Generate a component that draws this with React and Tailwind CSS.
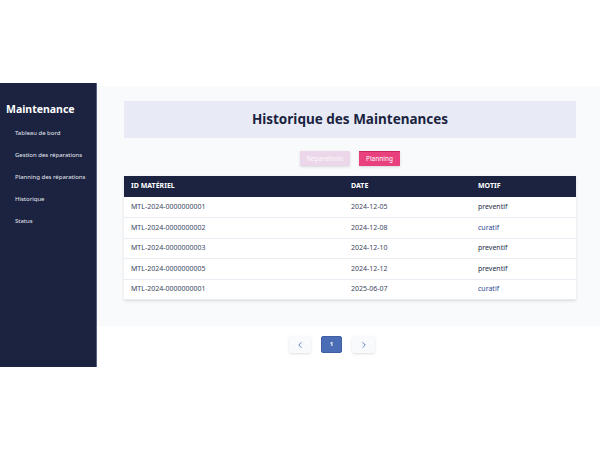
import { ChevronLeft, ChevronRight } from "lucide-react";

const rows = [
  { id: "MTL-2024-0000000001", date: "2024-12-05", motif: "preventif" },
  { id: "MTL-2024-0000000002", date: "2024-12-08", motif: "curatif" },
  { id: "MTL-2024-0000000003", date: "2024-12-10", motif: "preventif" },
  { id: "MTL-2024-0000000005", date: "2024-12-12", motif: "preventif" },
  { id: "MTL-2024-0000000001", date: "2025-06-07", motif: "curatif" },
];

const menu = [
  "Tableau de bord",
  "Gestion des réparations",
  "Planning des réparations",
  "Historique",
  "Status",
];

function Sidebar() {
  return (
    <aside className="w-[97px] h-[284px] shrink-0 bg-[#1b2340] border-r border-[#5a6180] text-white">
      <h1 className="pl-[6px] pt-[21px] text-[10.5px] font-bold leading-none">
        Maintenance
      </h1>
      <ul className="pl-[15px] pt-[14px] flex flex-col gap-[13px]">
        {menu.map((m) => (
          <li key={m} className="text-[6px] leading-[9px] text-[#e6e9f2]">
            {m}
          </li>
        ))}
      </ul>
    </aside>
  );
}

export default function App() {
  return (
    <div
      className="pt-[83px] flex bg-white min-h-[450px]"
      style={{ fontFamily: '"Noto Sans", "Open Sans", sans-serif' }}
    >
      <Sidebar />
      <main className="flex-1">
        <div className="mt-[3px] h-[240px] bg-[#f9fafc] pl-[27px] pr-[24px] pt-[15px]">
          <div className="h-[37px] bg-[#e8ebf6] flex items-center justify-center">
            <h2 className="text-[13.5px] font-bold text-[#1b2340]">
              Historique des Maintenances
            </h2>
          </div>

          <div className="mt-[13px] flex justify-center gap-[9px]">
            <button className="w-[50px] h-[15px] bg-[#ecd6e9] text-white/80 text-[6.5px] shadow-sm">
              Réparations
            </button>
            <button className="w-[41px] h-[15px] bg-[#e8417e] border-t border-[#c92a65] text-white text-[6.5px] shadow-sm">
              Planning
            </button>
          </div>

          <div className="mt-[10px] bg-white shadow-sm">
            <table className="w-full text-left border-collapse">
              <thead className="bg-[#1b2340]">
                <tr className="h-[21px] text-white text-[7px] font-bold uppercase">
                  <th className="pl-[7px] w-[227px]">ID Matériel</th>
                  <th className="w-[127px]">Date</th>
                  <th>Motif</th>
                </tr>
              </thead>
              <tbody>
                {rows.map((r, i) => (
                  <tr
                    key={i}
                    className="h-[20.6px] border-b border-[#e9ecf2] text-[7px] text-[#3b4560]"
                  >
                    <td className="pl-[7px]">{r.id}</td>
                    <td>{r.date}</td>
                    <td
                      className={
                        r.motif === "curatif" ? "text-[#2b4a8e]" : "text-[#262e4a]"
                      }
                    >
                      {r.motif}
                    </td>
                  </tr>
                ))}
              </tbody>
            </table>
          </div>
        </div>

        <div className="mt-[10px] flex gap-[10px] pl-[192px]">
          <button className="w-[22px] h-[17px] bg-[#f9fafc] rounded-[2px] shadow-sm flex items-center justify-center text-[#4a6db5]">
            <ChevronLeft size={10} strokeWidth={2} />
          </button>
          <button className="w-[21px] h-[17px] bg-[#4a6db5] rounded-[2px] border border-[#3e5fa3] text-white text-[6px] font-bold flex items-center justify-center">
            1
          </button>
          <button className="w-[23px] h-[17px] bg-[#f9fafc] rounded-[2px] shadow-sm flex items-center justify-center text-[#4a6db5]">
            <ChevronRight size={10} strokeWidth={2} />
          </button>
        </div>
      </main>
    </div>
  );
}
